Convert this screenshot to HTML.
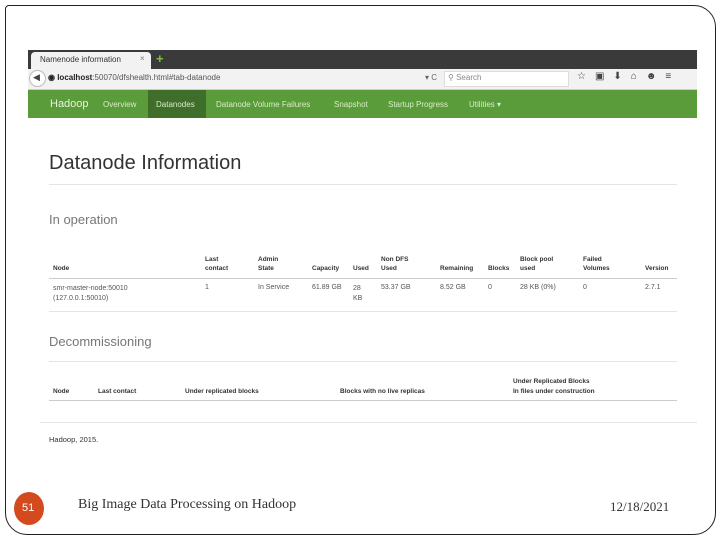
<!DOCTYPE html>
<html><head><meta charset="utf-8"><style>
*{margin:0;padding:0;box-sizing:border-box}
body{width:720px;height:540px;background:#fff;position:relative;overflow:hidden;font-family:"Liberation Sans",sans-serif;color:#333}
.a{position:absolute;white-space:nowrap}
.s{font-size:7px}
.b{font-size:6.5px;font-weight:bold;line-height:9px}
.hr{position:absolute;height:1px;background:#e4e4e4}
.nav{font-size:8px;color:#d8ecc8}
</style></head><body>
<div class="a" style="left:5px;top:5px;width:711px;height:530px;border:1px solid #222;border-radius:4px 22px 22px 22px"></div>
<!-- browser chrome -->
<div class="a" style="left:28px;top:50px;width:669px;height:19px;background:#3a3a3a"></div>
<div class="a" style="left:31px;top:52px;width:120px;height:17px;background:#f2f2f2;border-radius:4px 4px 0 0"></div>
<div class="a" style="left:40px;top:55px;font-size:8px;color:#333">Namenode information</div>
<div class="a" style="left:140px;top:54px;font-size:8px;color:#777">×</div>
<div class="a" style="left:156px;top:51px;font-size:13px;color:#7ac043;font-weight:bold">+</div>
<div class="a" style="left:28px;top:69px;width:669px;height:21px;background:#f2f2f2;border-bottom:1px solid #ccc"></div>
<div class="a" style="left:29px;top:70px;width:17px;height:17px;border:1px solid #bbb;border-radius:50%;background:#fff"></div>
<div class="a" style="left:33px;top:72px;font-size:9px;color:#444">◀</div>
<div class="a" style="left:48px;top:73px;font-size:8px;color:#555"><b style="color:#222">◉ localhost</b>:50070/dfshealth.html#tab-datanode</div>
<div class="a" style="left:425px;top:73px;font-size:8px;color:#666">▾ C</div>
<div class="a" style="left:444px;top:71px;width:125px;height:16px;background:#fff;border:1px solid #ddd"></div>
<div class="a" style="left:448px;top:73px;font-size:8px;color:#888">⚲ Search</div>
<div class="a" style="left:577px;top:71px;font-size:10px;color:#444;letter-spacing:9px">☆▣⬇⌂☻≡</div>
<div class="a" style="left:28px;top:90px;width:669px;height:28px;background:#5a9c3a"></div>
<div class="a" style="left:148px;top:90px;width:58px;height:28px;background:#3f6d2a"></div>
<div class="a" style="left:50px;top:98px;font-size:11px;color:#e6f3dc">Hadoop</div>
<div class="a nav" style="left:103px;top:100px">Overview</div>
<div class="a nav" style="left:156px;top:100px">Datanodes</div>
<div class="a nav" style="left:216px;top:100px">Datanode Volume Failures</div>
<div class="a nav" style="left:334px;top:100px">Snapshot</div>
<div class="a nav" style="left:388px;top:100px">Startup Progress</div>
<div class="a nav" style="left:469px;top:100px">Utilities ▾</div>
<!-- content -->
<div class="a" style="left:49px;top:152px;font-size:20px;color:#333">Datanode Information</div>
<div class="hr" style="left:49px;top:184px;width:628px"></div>
<div class="a" style="left:49px;top:212px;font-size:13px;color:#777">In operation</div>
<div class="a b" style="left:53px;top:264px">Node</div>
<div class="a b" style="left:205px;top:255px">Last<br>contact</div>
<div class="a b" style="left:258px;top:255px">Admin<br>State</div>
<div class="a b" style="left:312px;top:264px">Capacity</div>
<div class="a b" style="left:353px;top:264px">Used</div>
<div class="a b" style="left:381px;top:255px">Non DFS<br>Used</div>
<div class="a b" style="left:440px;top:264px">Remaining</div>
<div class="a b" style="left:488px;top:264px">Blocks</div>
<div class="a b" style="left:520px;top:255px">Block pool<br>used</div>
<div class="a b" style="left:583px;top:255px">Failed<br>Volumes</div>
<div class="a b" style="left:645px;top:264px">Version</div>
<div class="hr" style="left:49px;top:278px;width:628px;background:#ccc"></div>
<div class="a s" style="left:53px;top:284px;line-height:10px;color:#555">smr-master-node:50010<br>(127.0.0.1:50010)</div>
<div class="a s" style="left:205px;top:284px;color:#555">1</div>
<div class="a s" style="left:258px;top:284px;color:#555">In Service</div>
<div class="a s" style="left:312px;top:284px;color:#555">61.89 GB</div>
<div class="a s" style="left:353px;top:284px;line-height:10px;color:#555">28<br>KB</div>
<div class="a s" style="left:381px;top:284px;color:#555">53.37 GB</div>
<div class="a s" style="left:440px;top:284px;color:#555">8.52 GB</div>
<div class="a s" style="left:488px;top:284px;color:#555">0</div>
<div class="a s" style="left:520px;top:284px;color:#555">28 KB (0%)</div>
<div class="a s" style="left:583px;top:284px;color:#555">0</div>
<div class="a s" style="left:645px;top:284px;color:#555">2.7.1</div>
<div class="hr" style="left:49px;top:311px;width:628px"></div>
<div class="a" style="left:49px;top:334px;font-size:13px;color:#777">Decommissioning</div>
<div class="hr" style="left:49px;top:361px;width:628px"></div>
<div class="a b" style="left:53px;top:387px">Node</div>
<div class="a b" style="left:98px;top:387px">Last contact</div>
<div class="a b" style="left:185px;top:387px">Under replicated blocks</div>
<div class="a b" style="left:340px;top:387px">Blocks with no live replicas</div>
<div class="a b" style="left:513px;top:377px;line-height:10px">Under Replicated Blocks<br>In files under construction</div>
<div class="hr" style="left:49px;top:400px;width:628px;background:#ccc"></div>
<div class="hr" style="left:40px;top:422px;width:657px"></div>
<div class="a" style="left:49px;top:435px;font-size:7.5px;color:#333">Hadoop, 2015.</div>
<!-- footer -->
<div class="a" style="left:14px;top:492px;width:30px;height:33px;border-radius:50%;background:#d24a1e"></div>
<div class="a" style="left:22px;top:502px;font-size:11px;color:#fff">51</div>
<div class="a" style="left:78px;top:497px;font-family:'Liberation Serif',serif;font-size:14px;color:#333">Big Image Data Processing on Hadoop</div>
<div class="a" style="left:610px;top:499px;font-family:'Liberation Serif',serif;font-size:13px;color:#333">12/18/2021</div>
</body></html>
